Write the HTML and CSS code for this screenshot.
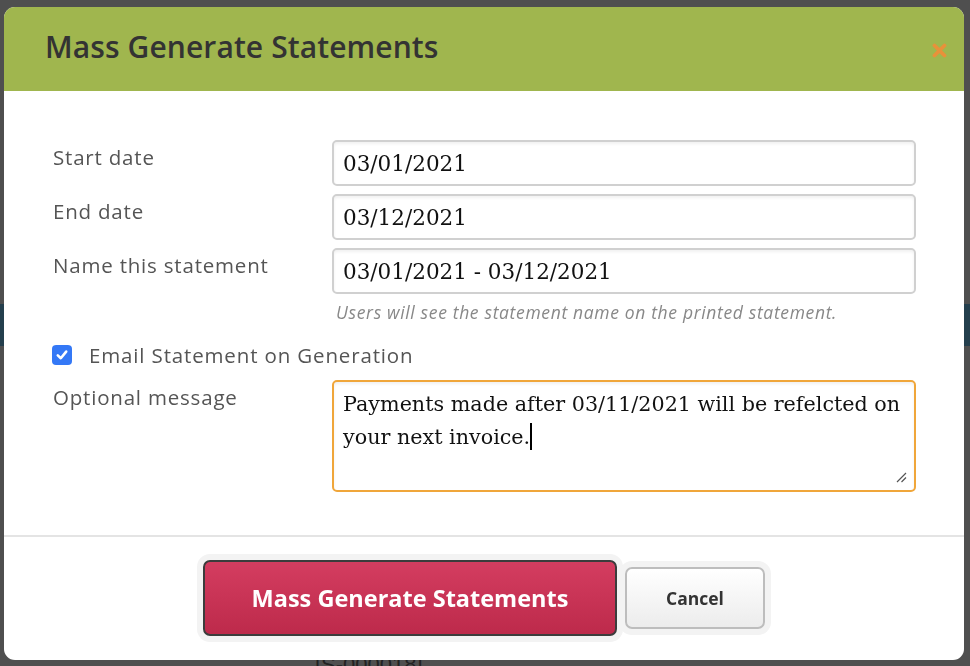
FILE: index.html
```html
<!DOCTYPE html>
<html>
<head>
<meta charset="utf-8">
<link rel="stylesheet" href="styles.css">
</head>
<body>
<div class="page">
  <div class="page-band"></div>
  <div class="page-ref">[S-000018]</div>
</div>
<div class="modal">
  <div class="modal-header">
    <h1 class="modal-title">Mass Generate Statements</h1>
    <span class="close-btn">
      <svg width="15" height="15" viewBox="0 0 15 15"><path d="M2.5 2.5 L12.5 12.5 M12.5 2.5 L2.5 12.5" stroke="#e8913a" stroke-width="3.8" stroke-linecap="round"/></svg>
    </span>
  </div>
  <div class="modal-body">
    <div class="form-grid">
      <label class="field-label">Start date</label>
      <div class="field-input">03/01/2021</div>
      <label class="field-label">End date</label>
      <div class="field-input">03/12/2021</div>
      <label class="field-label">Name this statement</label>
      <div class="field-wrap">
        <div class="field-input">03/01/2021 - 03/12/2021</div>
        <p class="help-text">Users will see the statement name on the printed statement.</p>
      </div>
    </div>
    <div class="check-row">
      <span class="checkbox">
        <svg width="14" height="14" viewBox="0 0 14 14"><path d="M2.8 7.4 L5.8 10.2 L11.2 3.6" fill="none" stroke="#fff" stroke-width="2.6" stroke-linecap="round" stroke-linejoin="round"/></svg>
      </span>
      <span class="check-label">Email Statement on Generation</span>
    </div>
    <div class="form-grid msg-grid">
      <label class="field-label">Optional message</label>
      <div class="field-textarea">Payments made after 03/11/2021 will be refelcted on your next invoice.<span class="caret"></span>
        <svg class="resizer" width="12" height="12" viewBox="0 0 12 12"><path d="M11 2 L2 11 M11 6.5 L6.5 11" stroke="#555" stroke-width="1.2"/></svg>
      </div>
    </div>
  </div>
  <div class="modal-footer">
    <button class="btn btn-primary">Mass Generate Statements</button>
    <button class="btn btn-cancel">Cancel</button>
  </div>
</div>
</body>
</html>
```
FILE: styles.css
```css
* { box-sizing: border-box; }
html, body { margin: 0; padding: 0; }
body {
  width: 970px;
  height: 666px;
  overflow: hidden;
  background: #4f4f4f;
  font-family: "Open Sans", "Lato", sans-serif;
}
.page {
  height: 666px;
  display: flex;
  flex-direction: column;
}
.page-band {
  margin-top: 304px;
  height: 42px;
  background: #243f4d;
}
.page-ref {
  margin-top: auto;
  margin-left: 315px;
  font-family: "Liberation Sans", sans-serif;
  font-size: 22px;
  color: #222;
  line-height: 14px;
  height: 8px;
  overflow: hidden;
}
.modal {
  position: fixed;
  left: 4px;
  top: 7px;
  width: 960px;
  height: 653px;
  background: #fff;
  border-radius: 11px;
  overflow: hidden;
  display: flex;
  flex-direction: column;
}
.modal-header {
  height: 84px;
  background: #a0b64e;
  display: flex;
  align-items: center;
  justify-content: space-between;
  padding: 0 17px 0 41px;
}
.modal-title {
  margin: 0;
  font-size: 30px;
  font-weight: 600;
  letter-spacing: 0.1px;
  color: #333;
  padding-bottom: 6px;
}
.close-btn {
  display: flex;
  margin-top: 2px;
}
.modal-body {
  padding: 49px 48px 0 49px;
  height: 446px;
  border-bottom: 2px solid #e4e4e4;
}
.form-grid {
  display: grid;
  grid-template-columns: 279px 1fr;
  row-gap: 8px;
}
.field-label {
  font-size: 20.5px;
  letter-spacing: 0.8px;
  color: #555;
  padding-top: 4px;
  line-height: 26px;
}
.field-input {
  height: 46px;
  border: 2px solid #d0d0d0;
  border-radius: 5px;
  box-shadow: inset 0 2px 3px rgba(0,0,0,0.06);
  padding: 0 9px;
  display: flex;
  align-items: center;
  font-family: "DejaVu Serif", serif;
  font-size: 21.5px;
  color: #111;
}
.help-text {
  margin: 7px 0 0 4px;
  font-size: 17.5px;
  font-style: italic;
  letter-spacing: 0.65px;
  color: #888;
  line-height: 22px;
}
.check-row {
  display: flex;
  align-items: center;
  margin-top: 18px;
  margin-left: -1px;
}
.checkbox {
  width: 20px;
  height: 20px;
  border-radius: 4px;
  background: #3478f6;
  display: flex;
  align-items: center;
  justify-content: center;
}
.check-label {
  margin-left: 17px;
  font-size: 20.5px;
  letter-spacing: 0.85px;
  color: #555;
}
.msg-grid {
  margin-top: 11px;
}
.field-textarea {
  position: relative;
  height: 112px;
  border: 2px solid #f0a63a;
  border-radius: 5px;
  box-shadow: inset 0 2px 3px rgba(0,0,0,0.06);
  padding: 6px 4px 6px 9px;
  font-family: "DejaVu Serif", serif;
  font-size: 20.7px;
  line-height: 33px;
  color: #111;
}
.caret {
  display: inline-block;
  width: 1.5px;
  height: 27px;
  background: #000;
  vertical-align: -6px;
}
.resizer {
  position: absolute;
  right: 7px;
  bottom: 7px;
}
.modal-footer {
  flex: 1;
  display: flex;
  align-items: center;
  justify-content: center;
  gap: 8px;
  padding-bottom: 2px;
}
.btn {
  font-family: "Open Sans", "Lato", sans-serif;
  font-weight: 700;
  cursor: pointer;
}
.btn-primary {
  width: 414px;
  height: 76px;
  background: linear-gradient(#d43d60, #bd2a4b);
  border: 2px solid #3c3c3c;
  border-radius: 7px;
  box-shadow: 0 0 0 6px #f3f3f3;
  color: #fff;
  font-size: 23.5px;
}
.btn-cancel {
  width: 140px;
  height: 62px;
  background: linear-gradient(#ffffff, #ececec);
  border: 2px solid #bdbdbd;
  border-radius: 7px;
  box-shadow: 0 0 0 6px #f3f3f3;
  color: #333;
  font-size: 17.5px;
}
```
